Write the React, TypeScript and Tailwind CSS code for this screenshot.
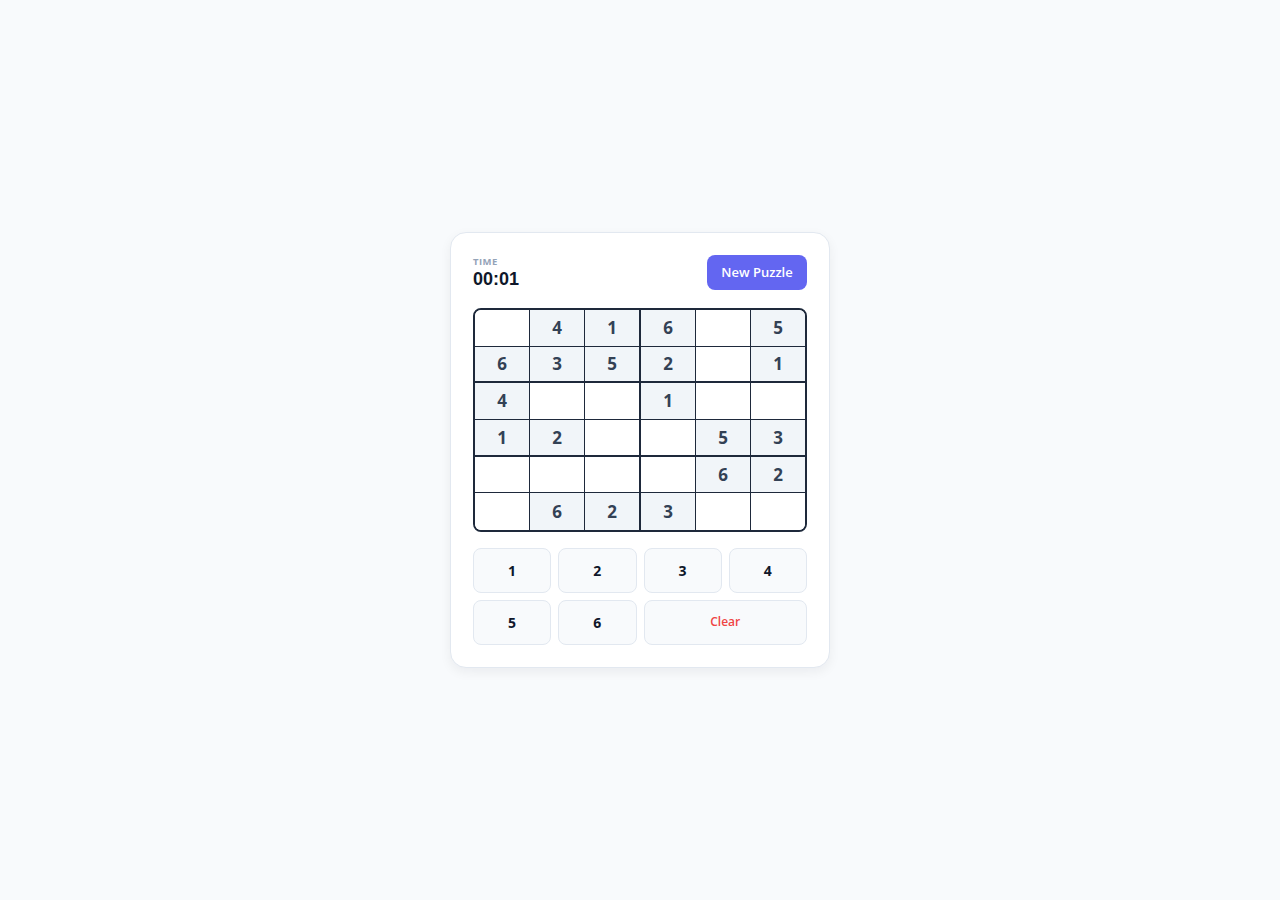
import { useState } from 'react'

const GIVEN: (number | null)[][] = [
  [null, 4, 1, 6, null, 5],
  [6, 3, 5, 2, null, 1],
  [4, null, null, 1, null, null],
  [1, 2, null, null, 5, 3],
  [null, null, null, null, 6, 2],
  [null, 6, 2, 3, null, null],
]

function cellClass(r: number, c: number, given: boolean, active: boolean) {
  const right = c === 5 ? '' : c === 2 ? 'border-r-2 border-r-[#1e293b]' : 'border-r border-r-[#1e293b]'
  const bottom = r === 5 ? '' : r === 1 || r === 3 ? 'border-b-2 border-b-[#1e293b]' : 'border-b border-b-[#1e293b]'
  const bg = active ? 'bg-[#e0e7ff]' : given ? 'bg-[#f1f5f9]' : 'bg-white'
  return `flex h-[36.67px] flex-1 items-center justify-center text-[17px] font-bold text-[#334155] ${right} ${bottom} ${bg}`
}

export default function App() {
  const [selected, setSelected] = useState<[number, number] | null>(null)

  return (
    <div
      className="flex min-h-[900px] items-center justify-center bg-[#f8fafc]"
      style={{ fontFamily: '"Open Sans", "Noto Sans", sans-serif' }}
    >
      <div className="w-[380px] rounded-2xl border border-[#e2e8f0] bg-white p-[22px] shadow-[0_4px_12px_rgba(15,23,42,0.06)]">
        {/* Header */}
        <div className="flex items-center justify-between">
          <div>
            <div className="text-[9.5px] font-bold uppercase leading-[12px] tracking-[0.05em] text-[#94a3b8]">Time</div>
            <div
              className="text-[18px] font-bold leading-[22px] text-[#0f172a]"
              style={{ fontFamily: '"Liberation Sans", Arial, sans-serif' }}
            >
              00:01
            </div>
          </div>
          <button className="h-[35px] w-[100px] rounded-lg bg-[#6366f1] text-[13px] font-semibold text-white">
            New Puzzle
          </button>
        </div>

        {/* Board */}
        <div className="mt-[18px] overflow-hidden rounded-lg border-2 border-[#1e293b]">
          {GIVEN.map((row, r) => (
            <div key={r} className="flex">
              {row.map((v, c) => (
                <div
                  key={c}
                  onClick={() => v === null && setSelected([r, c])}
                  className={cellClass(r, c, v !== null, !!selected && selected[0] === r && selected[1] === c)}
                >
                  {v}
                </div>
              ))}
            </div>
          ))}
        </div>

        {/* Keypad */}
        <div className="mt-4 grid grid-cols-4 gap-[7px]">
          {[1, 2, 3, 4, 5, 6].map((n) => (
            <button
              key={n}
              className="h-[45px] rounded-lg border border-[#e2e8f0] bg-[#f8fafc] text-[14px] font-bold text-[#0f172a]"
            >
              {n}
            </button>
          ))}
          <button className="col-span-2 h-[45px] rounded-lg border border-[#e2e8f0] bg-[#f8fafc] text-[12px] font-semibold text-[#ef4444]">
            Clear
          </button>
        </div>
      </div>
    </div>
  )
}
